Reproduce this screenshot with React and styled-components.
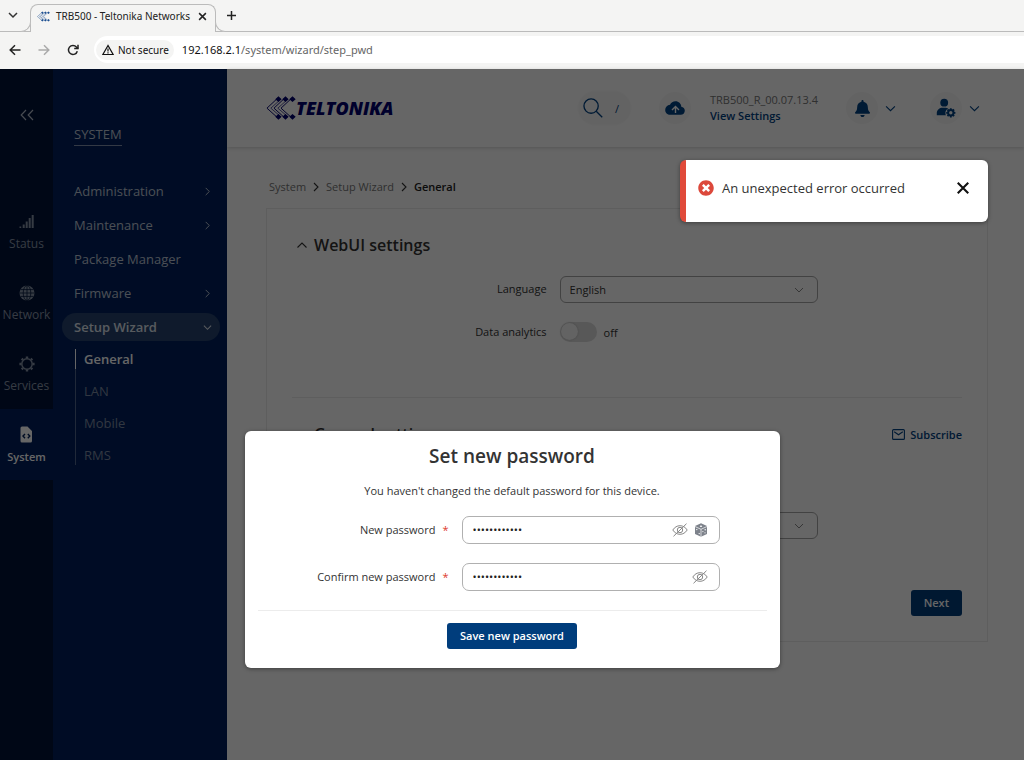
import React from 'react';
import styled, { createGlobalStyle, css } from 'styled-components';
import { FaBell, FaTimesCircle } from 'react-icons/fa';

const UI = '"Open Sans", "Liberation Sans", sans-serif';
const CHROME = '"Noto Sans", "Liberation Sans", sans-serif';

const Global = createGlobalStyle`
  *, *::before, *::after { box-sizing: border-box; }
  html, body { margin: 0; height: 100%; }
  #root { height: 100%; }
  body { font-family: ${UI}; font-size: 11px; color: #333; background: #fff; }
  button, input, select { font: inherit; color: inherit; margin: 0; }
  button { border: 0; padding: 0; background: none; cursor: pointer; }
  h1, h2, p, ul { margin: 0; padding: 0; }
  ul { list-style: none; }
  a { color: inherit; text-decoration: none; }
  svg { display: block; flex: none; }
`;

/* ---------- icons ---------- */

const Line = ({ w, h = w, box = '0 0 16 16', sw = 1.5, children, ...rest }) => (
  <svg width={w} height={h} viewBox={box} fill="none" stroke="currentColor" strokeWidth={sw} aria-hidden="true" {...rest}>
    {children}
  </svg>
);

const ChevronDown = ({ size = 10, sw = 1 }) => (
  <Line w={size} h={size} box="0 0 10 10" sw={sw}><path d="M1 3l4 4 4-4" /></Line>
);
const ChevronUp = () => <Line w={12} box="0 0 12 12" sw={1.1}><path d="M1.500 8.500L6 4l4.500 4.500" /></Line>;
const ChevronRight = ({ size = 10, sw = 1.1 }) => (
  <Line w={size} h={size} box="0 0 10 10" sw={sw}><path d="M3 1l4 4-4 4" /></Line>
);
const Cross = ({ size, sw }) => (
  <Line w={size} h={size} box="0 0 12 12" sw={sw}><path d="M1.500 1.500l9 9M10.500 1.500l-9 9" /></Line>
);
const ArrowLeft = () => <Line w={12} box="0 0 12 12" sw={1.5}><path d="M11.500 6H1.500M6 1.200L1.200 6 6 10.800" /></Line>;
const ArrowRight = () => <Line w={12} box="0 0 12 12" sw={1.5}><path d="M.500 6h10M6 1.200L10.800 6 6 10.800" /></Line>;
const Reload = () => (
  <Line w={12} box="0 0 12 12" sw={1.5}>
    <path d="M10.300 7.200A4.500 4.500 0 1 1 9.400 3L11 4.600" />
    <path d="M11 .800V4.600H7.200" />
  </Line>
);
const Warning = () => (
  <Line w={12} box="0 0 12 12" sw={1.2}>
    <path d="M6 1.500L.900 10.500h10.200z" />
    <path d="M6 4.500v3M6 8.300v1.200" />
  </Line>
);
const Search = () => (
  <Line w={20} box="0 0 21 21" sw={1.4}><circle cx="8.500" cy="8.500" r="7.500" /><path d="M13.900 13.900l6.300 6.300" /></Line>
);
const Envelope = () => (
  <Line w={13} h={11} box="0 0 13 11" sw={1.1}><rect x=".600" y=".600" width="11.800" height="9.800" rx="1" /><path d="M2.200 2.800l4.300 3 4.300-3" /></Line>
);
const Collapse = () => (
  <Line w={14} h={12} box="0 0 14 12" sw={1.2}><path d="M6 1L1.200 6 6 11M13 1L8.200 6l4.800 5" /></Line>
);
const Signal = () => (
  <svg width="15" height="15" viewBox="0 0 15 15" fill="currentColor" aria-hidden="true">
    <path d="M.5 12.500h1.700V14H.500zM3.700 10.500h2V14h-2zM6.700 7.500h2V14h-2zM9.700 4h2v10h-2zM12.700 1h2v13h-2z" />
  </svg>
);
const Globe = () => (
  <svg width="16" height="16" viewBox="0 0 16 16" aria-hidden="true">
    <circle cx="8" cy="8" r="7.500" fill="currentColor" />
    <g fill="none" stroke="#01153a" strokeWidth=".8">
      <ellipse cx="8" cy="8" rx="3.800" ry="7.500" />
      <path d="M8 .500v15M.500 8h15M1.500 4.600h13M1.500 11.400h13" />
    </g>
  </svg>
);
const Gear = () => (
  <Line w={16} sw={1.5}>
    <circle cx="8" cy="8" r="5.200" />
    <path strokeWidth="2.400" d="M8 .400v2M8 13.600v2M.400 8h2M13.600 8h2M2.700 2.700L4 4M12 12l1.300 1.300M2.700 13.300L4 12M12 4l1.300-1.300" />
  </Line>
);
const FileCode = () => (
  <svg width="13" height="17" viewBox="0 0 13 17" aria-hidden="true">
    <path fill="currentColor" d="M2 .500h5.500L12 5v10a1.500 1.500 0 0 1-1.500 1.500H2A1.500 1.500 0 0 1 .500 15V2A1.500 1.500 0 0 1 2 .500z" />
    <path fill="none" stroke="#001f57" strokeWidth="1.400" d="M5 8L3 10.100l2 2.100M7.800 8l2 2.100-2 2.100" />
  </svg>
);
const CloudUp = () => (
  <svg width="20" height="14" viewBox="0 0 20 14" aria-hidden="true">
    <path fill="currentColor" d="M16.300 5.700C16.200 2.600 13.700.200 10.500.200 8 .200 6 1.500 5 3.700 2.200 4 .200 6.200.200 8.900c0 2.700 2.200 4.900 4.900 4.900h10.600c2.300 0 4.100-1.800 4.100-4.100 0-2-1.500-3.700-3.500-4z" />
    <path fill="none" stroke="#fff" strokeWidth="1.400" d="M10.500 12V5.600M7 9l3.500-3.500L14 9" />
  </svg>
);
const UserGear = () => (
  <svg width="20" height="20" viewBox="0 0 20 20" aria-hidden="true">
    <g fill="currentColor">
      <circle cx="8.200" cy="4.700" r="3.900" />
      <path d="M.800 17.300v-2c0-3.600 2.800-5.600 6-5.600h2.800c1 0 1.800.200 2.600.600-1.700 1-2.800 2.700-2.800 4.700 0 .800.200 1.600.500 2.300z" />
    </g>
    <circle cx="14.800" cy="14.800" r="2.700" fill="none" stroke="currentColor" strokeWidth="2" />
    <path stroke="currentColor" strokeWidth="1.800" d="M14.800 10.200v1.600M14.800 17.800v1.600M10.200 14.800h1.600M17.800 14.800h1.600M11.500 11.500l1.100 1.100M17 17l1.100 1.100M11.500 18.100l1.100-1.100M17 12.600l1.100-1.100" />
  </svg>
);
const EyeOff = () => (
  <Line w={16} h={14} box="0 0 16 14" sw={1}>
    <path d="M.800 7C2.600 4.200 5.100 2.700 8 2.700S13.400 4.200 15.200 7C13.400 9.800 10.900 11.300 8 11.300S2.600 9.800.800 7z" />
    <circle cx="8" cy="7" r="2.700" />
    <path d="M1.500 13.300L14.500.700" />
  </Line>
);
const Dice = () => (
  <svg width="14" height="14" viewBox="0 0 14 14" aria-hidden="true">
    <path fill="#7d828b" d="M7 .300l6 2.700v8L7 13.800 1 11V3z" />
    <path fill="none" stroke="#fff" strokeWidth=".7" d="M1 3.500l6 2.800 6-2.800M7 6.300v7.500" />
    <g fill="#fff">
      <ellipse cx="7" cy="3.200" rx="1.200" ry=".700" />
      <circle cx="2.800" cy="6.600" r=".700" /><circle cx="5.200" cy="10.600" r=".700" />
      <circle cx="11.200" cy="6.800" r=".700" /><circle cx="8.900" cy="8.600" r=".600" /><circle cx="11" cy="9.800" r=".600" />
    </g>
  </svg>
);
const LogoMark = ({ w, h }) => (
  <svg width={w} height={h} viewBox="46 45 94 77" fill="none" stroke="currentColor" aria-hidden="true">
    <path strokeWidth="3" d="M79 56L49 84l30 27M101 56L71 84l30 27M123 56L93 84l30 27" />
    <path strokeWidth="2" d="M88 60L61 84l27 23M110 60L83 84l27 23" />
    <path fill="currentColor" stroke="none" d="M85 47l10 9-10 9-10-9zM107 47l10 9-10 9-10-9zM129 47l10 9-10 9-10-9zM85 102l10 9-10 9-10-9zM107 102l10 9-10 9-10-9zM129 102l10 9-10 9-10-9z" />
  </svg>
);

/* ---------- browser frame ---------- */

const Window = styled.div`
  display: flex;
  flex-direction: column;
  min-height: 100%;
`;

const TabStrip = styled.div`
  display: flex;
  align-items: flex-end;
  height: 32px;
  flex: none;
  padding-left: 30px;
  background: #f4f4f3;
  border-bottom: 1px solid #bbb;
  font-family: ${CHROME};
  position: relative;
`;

const TabSearch = styled.button`
  position: absolute;
  left: 8px;
  top: 10px;
`;

const Tab = styled.div`
  position: relative;
  display: flex;
  align-items: center;
  gap: 6px;
  width: 186px;
  height: 28px;
  margin-bottom: -1px;
  padding: 0 8px 5px 6px;
  border: 1px solid #bbb;
  border-bottom: 0;
  border-radius: 8px 8px 0 0;
  background: #f4f4f3;
  font-size: 10px;
  color: #222;
  &::before, &::after {
    content: '';
    position: absolute;
    bottom: 0;
    width: 10px;
    height: 10px;
    border-bottom: 1px solid #bbb;
    background: #f4f4f3;
  }
  &::before { left: -10px; border-right: 1px solid #bbb; border-radius: 0 0 10px 0; }
  &::after { right: -10px; border-left: 1px solid #bbb; border-radius: 0 0 0 10px; }
`;
const TabTitle = styled.span`flex: 1; white-space: nowrap;`;
const Favicon = styled.span`color: #1d4f91;`;
const NewTab = styled.button`padding: 0 0 10px 10px; color: #222;`;

const Toolbar = styled.div`
  display: flex;
  align-items: center;
  height: 37px;
  flex: none;
  gap: 17px;
  padding: 0 0 2px 9px;
  background: #f4f4f3;
  color: #222;
  font-family: ${CHROME};
`;
const NavButton = styled.button`color: ${(p) => (p.$dim ? '#aaa' : '#222')};`;
const Address = styled.div`
  display: flex;
  align-items: center;
  flex: 1;
  gap: 8px;
  height: 27px;
  padding-left: 2px;
  margin-left: -2px;
  border-radius: 14px 0 0 14px;
  background: #fff;
`;
const Secure = styled.span`
  display: flex;
  align-items: center;
  gap: 4px;
  height: 20px;
  padding: 0 5px 0 6px;
  border-radius: 10px;
  background: #f4f4f3;
  font-size: 10px;
  color: #111;
`;
const Url = styled.span`font-size: 11px; color: #666; b { font-weight: 400; color: #111; }`;

/* ---------- application ---------- */

const Page = styled.div`
  position: relative;
  display: flex;
  flex: 1;
`;

const Rail = styled.nav`
  display: flex;
  flex-direction: column;
  width: 53px;
  flex: none;
  background: #021338;
  color: #8794a8;
`;
const RailToggle = styled.button`
  display: flex;
  justify-content: center;
  padding: 40px 0 75px;
  color: #b4bccb;
`;
const RailItem = styled.a`
  display: flex;
  flex-direction: column;
  align-items: center;
  gap: 6px;
  height: 71px;
  padding-top: 17px;
  font-size: 12px;
  line-height: 16px;
  ${(p) => p.$on && css`
    background: #00205c;
    color: #fff;
    font-size: 11px;
    font-weight: 600;
  `}
`;
const RailIcon = styled.span`
  display: flex;
  align-items: center;
  height: 17px;
`;

const Menu = styled.nav`
  width: 174px;
  flex: none;
  padding: 56px 7px 0 9px;
  background: #00205c;
  color: #bcc5d4;
`;
const MenuTitle = styled.h2`
  display: inline-block;
  margin: 0 0 31px 12px;
  padding-bottom: 2px;
  border-bottom: 1px solid #8090ad;
  font-size: 13px;
  line-height: 18px;
  font-weight: 400;
`;
const MenuList = styled.ul`display: flex; flex-direction: column; gap: 6px;`;
const MenuItem = styled.a`
  display: flex;
  align-items: center;
  justify-content: space-between;
  height: 28px;
  padding: 0 8px 0 12px;
  border-radius: 14px;
  font-size: 13px;
  ${(p) => p.$on && css`background: #26426e; color: #dde3ec; font-weight: 600;`}
`;
const SubList = styled.ul`
  margin: 8px 0 0 13px;
  border-left: 1px solid #51678f;
  display: flex;
  flex-direction: column;
  gap: 12px;
`;
const SubItem = styled.a`
  display: block;
  margin-left: -1px;
  padding-left: 8px;
  font-size: 13px;
  line-height: 20px;
  color: #7c89a3;
  border-left: 1px solid transparent;
  ${(p) => p.$on && css`border-color: #fff; color: #fff; font-weight: 600;`}
`;

const Main = styled.div`flex: 1; min-width: 0; background: #fff;`;

const Header = styled.header`
  display: flex;
  align-items: center;
  height: 78px;
  padding: 0 44px 0 39px;
  color: #004182;
  box-shadow: 0 1px 4px rgba(0, 0, 0, 0.18);
`;
const Logo = styled.a`
  display: flex;
  align-items: center;
  margin-right: auto;
  color: #00006e;
  font-size: 18px;
  font-weight: 800;
  font-style: italic;
`;
const SearchBox = styled.button`
  display: flex;
  align-items: center;
  gap: 12px;
  height: 32px;
  padding: 0 11px 0 4px;
  margin-right: 29px;
  border-radius: 16px;
  background: #f8f8f8;
  color: #004182;
  box-shadow: 0 0 3px #eee;
`;
const Round = styled.button`
  display: flex;
  align-items: center;
  justify-content: center;
  width: 32px;
  height: 32px;
  border-radius: 16px;
  background: #f8f8f8;
  color: #004182;
`;
const Device = styled.div`
  width: 118px;
  margin: 0 18px 0 19px;
  line-height: 16px;
  color: #777;
`;
const StrongLink = styled.a`
  display: ${(p) => (p.$flex ? 'flex' : 'block')};
  align-items: center;
  gap: 5px;
  font-weight: 600;
  color: #004182;
`;
const DropButton = styled.button`
  display: flex;
  align-items: center;
  gap: 7px;
  margin-left: ${(p) => (p.$gap ? '34px' : 0)};
  color: #004182;
`;

const Crumbs = styled.nav`
  display: flex;
  align-items: center;
  gap: 5px;
  padding: 31px 0 13px 42px;
  line-height: 17px;
  color: #777;
  svg { color: #333; }
  b { font-weight: 600; color: #222; }
`;

const Card = styled.section`
  margin: 0 36px 0 39px;
  padding: 24px 25px 25px;
  border: 1px solid #ececec;
`;
const Heading = styled.h2`
  display: flex;
  align-items: center;
  gap: 6px;
  padding-left: 4px;
  font-size: 16px;
  line-height: 24px;
  font-weight: 600;
  color: #333;
`;
const Row = styled.div`
  display: grid;
  grid-template-columns: 38% minmax(0, 258px);
  column-gap: 13px;
  align-items: center;
  margin-top: ${(p) => p.$top}px;
`;
const RowLabel = styled.label`text-align: right; line-height: 17px; padding-bottom: 2px;`;
const SelectWrap = styled.div`
  display: grid;
  align-items: center;
  select {
    grid-area: 1 / 1;
    appearance: none;
    width: 100%;
    height: 27px;
    padding: 0 30px 0 9px;
    border: 1px solid #a5a5a5;
    border-radius: 6px;
    background: #fff;
  }
  svg { grid-area: 1 / 1; justify-self: end; margin-right: 14px; color: #888; pointer-events: none; }
`;
const SwitchWrap = styled.span`
  display: flex;
  align-items: center;
  gap: 7px;
  input {
    appearance: none;
    display: flex;
    width: 37px;
    height: 20px;
    padding: 1px;
    border-radius: 10px;
    background: #dcdcdc;
  }
  input::before { content: ''; width: 17px; height: 17px; border-radius: 50%; background: #f7f7f7; box-shadow: 0 0 2px #aaa; }
`;
const Rule = styled.hr`
  margin: ${(p) => p.$top}px 0 ${(p) => p.$bottom}px;
  border: 0;
  border-top: 1px solid #ececec;
`;
const SectionTop = styled.div`display: flex; align-items: center; justify-content: space-between;`;
const Actions = styled.div`
  display: flex;
  justify-content: ${(p) => p.$align};
  margin-top: ${(p) => p.$top}px;
`;
const Primary = styled.button`
  height: 26px;
  padding: 0 13px 1px;
  border-radius: 3px;
  background: #003d7c;
  color: #fff;
  font-weight: 600;
`;

/* ---------- layers over the page ---------- */

const Overlay = styled.div`
  position: absolute;
  inset: 0;
  display: flex;
  justify-content: center;
  align-items: flex-start;
  padding-top: 362px;
  background: rgba(0, 0, 0, 0.6);
`;
const Dialog = styled.form`
  width: 535px;
  max-width: 100%;
  padding: 9px 13px 19px;
  border-radius: 6px;
  background: #fff;
  color: #333;
  box-shadow: 0 1px 4px rgba(0, 0, 0, 0.4);
`;
const DialogTitle = styled.h1`
  text-align: center;
  font-size: 19px;
  line-height: 32px;
  font-weight: 600;
`;
const DialogText = styled.p`
  margin: 10px 0 17px;
  line-height: 17px;
  text-align: center;
`;
const Field = styled.div`
  display: grid;
  grid-template-columns: 191px minmax(0, 258px);
  column-gap: 13px;
  align-items: center;
  margin-bottom: 19px;
`;
const FieldLabel = styled.label`
  display: flex;
  justify-content: flex-end;
  gap: 7px;
  padding-bottom: 2px;
  line-height: 17px;
  i { font-style: normal; color: #dd3a2c; }
`;
const InputBox = styled.div`
  display: flex;
  align-items: center;
  gap: 6px;
  height: 28px;
  padding: 0 11px 1px 10px;
  border: 1px solid #b0b0b0;
  border-radius: 7px;
  color: #888;
  input {
    flex: 1;
    min-width: 0;
    padding: 0;
    border: 0;
    outline: 0;
    background: none;
    color: #222;
  }
`;

const Toast = styled.div`
  position: absolute;
  top: 91px;
  right: 36px;
  display: flex;
  align-items: center;
  gap: 8px;
  width: 308px;
  height: 62px;
  padding: 0 18px 6px 12px;
  border-left: 6px solid #e04a3a;
  border-radius: 6px;
  background: #fff;
  box-shadow: 0 1px 4px rgba(0, 0, 0, 0.4);
  font-size: 13px;
  color: #333;
  > svg { color: #dc483b; }
  button { margin-left: auto; color: #111; }
`;

const railItems = [
  ['Status', Signal],
  ['Network', Globe],
  ['Services', Gear],
  ['System', FileCode],
];
const menuItems = ['Administration', 'Maintenance', 'Package Manager', 'Firmware'];
const subItems = ['General', 'LAN', 'Mobile', 'RMS'];

export default function App() {
  return (
    <>
      <Global />
      <Window>
        <TabStrip>
          <TabSearch aria-label="Search tabs"><ChevronDown size={10} sw={1.5} /></TabSearch>
          <Tab>
            <Favicon><LogoMark w={13} h={11} /></Favicon>
            <TabTitle>TRB500 - Teltonika Networks</TabTitle>
            <button aria-label="Close tab"><Cross size={9} sw={2} /></button>
          </Tab>
          <NewTab aria-label="New tab">
            <Line w={11} box="0 0 11 11" sw={1.5}><path d="M5.500 1v9M1 5.500h9" /></Line>
          </NewTab>
        </TabStrip>
        <Toolbar>
          <NavButton aria-label="Back"><ArrowLeft /></NavButton>
          <NavButton $dim aria-label="Forward"><ArrowRight /></NavButton>
          <NavButton aria-label="Reload"><Reload /></NavButton>
          <Address>
            <Secure><Warning />Not secure</Secure>
            <Url><b>192.168.2.1</b>/system/wizard/step_pwd</Url>
          </Address>
        </Toolbar>

        <Page>
          <Rail>
            <RailToggle aria-label="Collapse menu"><Collapse /></RailToggle>
            {railItems.map(([name, Icon]) => (
              <RailItem key={name} href="#" $on={name === 'System'}>
                <RailIcon><Icon /></RailIcon>
                {name}
              </RailItem>
            ))}
          </Rail>
          <Menu>
            <MenuTitle>SYSTEM</MenuTitle>
            <MenuList>
              {menuItems.map((name) => (
                <li key={name}>
                  <MenuItem href="#">{name}{name !== 'Package Manager' && <ChevronRight size={9} />}</MenuItem>
                </li>
              ))}
              <li>
                <MenuItem href="#" $on>Setup Wizard<ChevronDown size={9} sw={1.2} /></MenuItem>
                <SubList>
                  {subItems.map((name) => (
                    <li key={name}><SubItem href="#" $on={name === 'General'}>{name}</SubItem></li>
                  ))}
                </SubList>
              </li>
            </MenuList>
          </Menu>

          <Main>
            <Header>
              <Logo href="#"><LogoMark w={30} h={26} />TELTONIKA</Logo>
              <SearchBox aria-label="Search"><Search />/</SearchBox>
              <Round aria-label="Updates"><CloudUp /></Round>
              <Device>
                TRB500_R_00.07.13.4
                <StrongLink href="#">View Settings</StrongLink>
              </Device>
              <DropButton aria-label="Notifications"><Round as="span"><FaBell size={17} /></Round><ChevronDown size={11} /></DropButton>
              <DropButton $gap aria-label="Account"><Round as="span"><UserGear /></Round><ChevronDown size={11} /></DropButton>
            </Header>

            <Crumbs aria-label="Breadcrumb">
              <a href="#">System</a><ChevronRight />
              <a href="#">Setup Wizard</a><ChevronRight />
              <b>General</b>
            </Crumbs>

            <Card>
              <Heading><ChevronUp />WebUI settings</Heading>
              <Row $top={19}>
                <RowLabel htmlFor="language">Language</RowLabel>
                <SelectWrap>
                  <select id="language"><option>English</option></select>
                  <ChevronDown />
                </SelectWrap>
              </Row>
              <Row $top={19}>
                <RowLabel htmlFor="analytics">Data analytics</RowLabel>
                <SwitchWrap><input id="analytics" type="checkbox" role="switch" />off</SwitchWrap>
              </Row>
              <Rule $top={55} $bottom={24} />
              <SectionTop>
                <Heading><ChevronUp />General settings</Heading>
                <StrongLink href="#" $flex><Envelope />Subscribe</StrongLink>
              </SectionTop>
              <Row $top={66}>
                <span />
                <SelectWrap>
                  <select aria-label="Time zone" />
                  <ChevronDown />
                </SelectWrap>
              </Row>
              <Actions $align="flex-end" $top={51}><Primary>Next</Primary></Actions>
            </Card>
          </Main>

          <Overlay>
            <Dialog onSubmit={(e) => e.preventDefault()}>
              <DialogTitle>Set new password</DialogTitle>
              <DialogText>You haven't changed the default password for this device.</DialogText>
              <Field>
                <FieldLabel htmlFor="pwd">New password <i>*</i></FieldLabel>
                <InputBox>
                  <input id="pwd" type="password" defaultValue="abcdefghijkl" />
                  <button type="button" aria-label="Show password"><EyeOff /></button>
                  <button type="button" aria-label="Generate password"><Dice /></button>
                </InputBox>
              </Field>
              <Field>
                <FieldLabel htmlFor="pwd2">Confirm new password <i>*</i></FieldLabel>
                <InputBox>
                  <input id="pwd2" type="password" defaultValue="abcdefghijkl" />
                  <button type="button" aria-label="Show password"><EyeOff /></button>
                </InputBox>
              </Field>
              <Rule $top={0} $bottom={12} />
              <Actions $align="center" $top={0}><Primary>Save new password</Primary></Actions>
            </Dialog>
          </Overlay>
          <Toast role="alert">
            <FaTimesCircle size={16} />
            An unexpected error occurred
            <button aria-label="Dismiss"><Cross size={14} sw={1.8} /></button>
          </Toast>
        </Page>
      </Window>
    </>
  );
}
